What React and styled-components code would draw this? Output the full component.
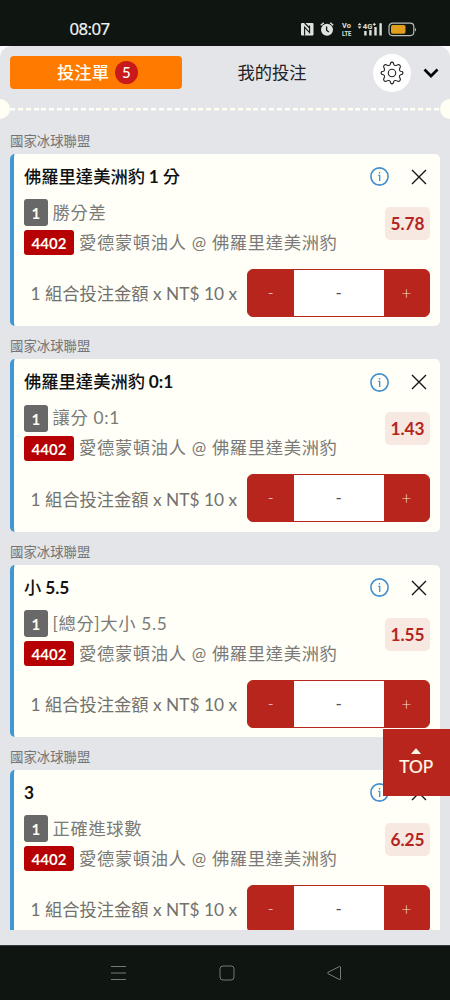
import styled, { createGlobalStyle } from 'styled-components';

const GlobalStyle = createGlobalStyle`
  * {
    box-sizing: border-box;
  }
  body {
    margin: 0;
    background: #0f1511;
    font-family: Lato, "Noto Sans CJK TC", sans-serif;
  }
  button {
    padding: 0;
    border: 0;
    background: none;
    font: inherit;
    color: inherit;
  }
`;

const Phone = styled.div`
  position: relative;
  display: flex;
  flex-direction: column;
  width: 450px;
  height: 1000px;
  overflow: hidden;
  background: #0f1511;
`;

const StatusBar = styled.div`
  display: flex;
  flex: none;
  align-items: center;
  justify-content: space-between;
  height: 45.5px;
  padding: 13px 33px 0 69.5px;
  color: #f1f3f1;
  font: 400 16.8px/20px "Noto Sans", sans-serif;
  letter-spacing: -0.55px;
  -webkit-text-stroke: 0.2px #f1f3f1;

  svg {
    letter-spacing: 0;
    -webkit-text-stroke: 0;
  }
`;

const Backdrop = styled.div`
  flex: none;
  height: 900px;
  background: #fbfbfb;
`;

const Sheet = styled.main`
  display: flex;
  flex-direction: column;
  height: 900px;
  border-radius: 12px 12px 0 0;
  background: #e4e5e8;
`;

const Header = styled.header`
  display: flex;
  flex: none;
  align-items: center;
  height: 54.5px;
  padding: 0 10px;
`;

const Tab = styled.button`
  display: flex;
  align-items: center;
  justify-content: center;
  gap: 6px;
  width: ${({ $active }) => ($active ? '172px' : '180px')};
  height: 33px;
  padding-left: ${({ $active }) => ($active ? '3px' : 0)};
  border-radius: 4px;
  background: ${({ $active }) => ($active ? '#ff7b00' : 'transparent')};
  color: ${({ $active }) => ($active ? '#fffef4' : '#222226')};
  font-size: 17.3px;
  font-weight: ${({ $active }) => ($active ? 500 : 400)};
  line-height: 33px;
`;

const Count = styled.span`
  width: 23px;
  height: 23px;
  border-radius: 50%;
  background: #c81a1b;
  font-size: 15px;
  line-height: 23px;
`;

const Settings = styled.button`
  display: flex;
  align-items: center;
  justify-content: center;
  width: 38px;
  height: 38px;
  margin-left: 10.5px;
  border-radius: 50%;
  background: #fff;
`;

const Collapse = styled.button`
  display: flex;
  margin-left: 12px;
`;

const Perforation = styled.div`
  display: flex;
  flex: none;
  align-items: center;
  justify-content: space-between;
  height: 20px;
  margin: -1px 0 0;
  background: repeating-linear-gradient(90deg, #fffff6 0 5px, transparent 5px 7.85px) 10px 50% / 430px 2.5px
    no-repeat;
`;

const Notch = styled.span`
  width: 10px;
  height: 20px;
  border-radius: ${({ $right }) => ($right ? '10px 0 0 10px' : '0 10px 10px 0')};
  background: #fffff3;
`;

const BetList = styled.section`
  flex: none;
  height: 811px;
  padding: 2px 10px 0;
  overflow: hidden;
`;

const League = styled.div`
  height: 32.8px;
  padding-top: 7px;
  color: #747577;
  font-size: 13.4px;
  line-height: 26px;
`;

const Card = styled.article`
  height: 172.6px;
  padding: 9px 10px 0;
  border-left: 4px solid #3d98d3;
  border-radius: 5px;
  background: #fffff7;
`;

const CardHead = styled.div`
  display: flex;
  align-items: center;
  height: 28px;
  padding-right: 3px;
`;

const Title = styled.h2`
  flex: 1;
  margin: 0;
  color: #111;
  font-size: 17.3px;
  font-weight: 500;
  line-height: 28px;
  word-spacing: -0.5px;

  b {
    font-weight: 700;
  }
`;

const IconButton = styled.button`
  display: flex;
  margin-left: ${({ $gap }) => $gap || 0}px;
`;

const CardBody = styled.div`
  display: flex;
  justify-content: space-between;
  height: 69px;
  padding-top: 9px;
`;

const Line = styled.div`
  display: flex;
  align-items: center;
  gap: 5px;
  height: 26px;
  margin-bottom: 4px;
  color: #7b7a77;
  font-size: 17.3px;
  letter-spacing: 0.66px;
  line-height: 26px;
  white-space: nowrap;
`;

const Tag = styled.span`
  width: ${({ $wide }) => ($wide ? '50px' : '23.5px')};
  height: ${({ $wide }) => ($wide ? '25px' : '27px')};
  border-radius: 3px;
  background: ${({ $wide }) => ($wide ? '#b60004' : '#686868')};
  color: #fffff2;
  font-size: 15px;
  font-weight: 700;
  letter-spacing: 0;
  line-height: ${({ $wide }) => ($wide ? '26px' : '29px')};
  text-align: center;
`;

const Odds = styled.strong`
  width: 45px;
  height: 33px;
  margin-top: 7px;
  border-radius: 5px;
  background: #f7e8e2;
  color: #b4251d;
  font-size: 17.3px;
  font-weight: 700;
  line-height: 34px;
  text-align: center;
`;

const Stake = styled.div`
  display: flex;
  align-items: center;
  justify-content: flex-end;
  gap: 10px;
  height: 48px;
  margin-top: 9px;
  color: #72716e;
  font-size: 17.3px;
  white-space: nowrap;
`;

const Stepper = styled.div`
  display: grid;
  grid-template-columns: 45.5px 90.5px 1fr;
  width: 183px;
  height: 48px;
  overflow: hidden;
  border: 1px solid #b7251c;
  border-radius: 6px;
  background: #b7251c;
  color: #f6d9d1;
  font-size: 17px;
  font-weight: 300;
  line-height: 46px;
  text-align: center;
`;

const Amount = styled.span`
  background: #fff;
  color: #555;
  font-weight: 400;
`;

const TopButton = styled.button`
  position: absolute;
  top: 728.5px;
  right: 0;
  display: flex;
  flex-direction: column;
  align-items: center;
  width: 67.5px;
  height: 67.5px;
  padding-top: 19px;
  background: #b7251c;
  color: #fffbe9;
  font-size: 17.3px;
  line-height: 26px;
  -webkit-text-stroke: 0.2px #fffbe9;
`;

const NavBar = styled.nav`
  position: absolute;
  right: 0;
  bottom: 0;
  left: 0;
  display: flex;
  align-items: center;
  gap: 91.5px;
  height: 55px;
  padding-left: 110px;
  border-top: 1px solid #353b38;
  background: #0f1511;
`;

const bets = [
  { name: '佛羅里達美洲豹', value: '1', unit: ' 分', market: '勝分差', odds: '5.78' },
  { name: '佛羅里達美洲豹', value: '0:1', market: '讓分 0:1', odds: '1.43' },
  { name: '小', value: '5.5', market: '[總分]大小 5.5', odds: '1.55' },
  { value: '3', market: '正確進球數', odds: '6.25' },
];

const GearIcon = () => (
  <svg width="24" height="24" viewBox="0 0 24 24" fill="none" stroke="#222" strokeWidth="1.1" strokeLinejoin="round">
    <path d="M10.3 3.4Q10.4 1.1 12 1.1T13.7 3.4Q14 4.2 15.1 4.5Q16 4.7 16.9 4.1Q18.6 3 19.8 4.2T19.9 7.1Q19.3 8 19.5 8.9Q19.8 10 20.6 10.3Q22.9 10.4 22.9 12T20.6 13.7Q19.8 14 19.5 15.1Q19.3 16 19.9 16.9Q21 18.6 19.8 19.8T16.9 19.9Q16 19.3 15.1 19.5Q14 19.8 13.7 20.6Q13.6 22.9 12 22.9T10.3 20.6Q10 19.8 8.9 19.5Q8 19.3 7.1 19.9Q5.4 21 4.2 19.8T4.1 16.9Q4.7 16 4.5 15.1Q4.2 14 3.4 13.7Q1.1 13.6 1.1 12T3.4 10.3Q4.2 10 4.5 8.9Q4.7 8 4.1 7.1Q3 5.4 4.2 4.2T7.1 4.1Q8 4.7 8.9 4.5Q10 4.2 10.3 3.4Z" />
    <circle cx="12" cy="12" r="3.7" />
  </svg>
);

const InfoIcon = () => (
  <svg width="19" height="19" viewBox="0 0 19 19" fill="none" stroke="#418fce">
    <circle cx="9.5" cy="9.5" r="8.6" strokeWidth="1.6" />
    <path d="M8.3 8.3h1.4V14M9.5 5v1.5" strokeWidth="1.3" />
  </svg>
);

const CloseIcon = () => (
  <svg width="16" height="16" viewBox="0 0 16 16" stroke="#151515" strokeWidth="1.4">
    <path d="M1 1l14 14M15 1L1 15" />
  </svg>
);

const StatusIcons = () => (
  <svg width="117" height="18" viewBox="0 0 117 18" fill="#dfe3df">
    {/* NFC */}
    <rect x="1" y="3" width="12.5" height="12.5" rx="1" />
    <path d="M4.6 15.5V7.2l5 5.4V5.4M4.6 3l5 5" fill="none" stroke="#0f1511" strokeWidth="1.1" />
    {/* alarm */}
    <circle cx="27" cy="9.8" r="6" />
    <path d="M20.8 5.3l3-2.6M33.2 5.3l-3-2.6" stroke="#dfe3df" strokeWidth="1.5" />
    <path d="M26.6 6.5v3.8l2.2 1.8" fill="none" stroke="#0f1511" strokeWidth="1.3" />
    <text x="42" y="8.2" fontFamily="Roboto" fontSize="7.4" fontWeight="700" textLength="8.8" lengthAdjust="spacingAndGlyphs">Vo</text>
    <text x="42" y="15.6" fontFamily="Roboto" fontSize="7.4" fontWeight="700" textLength="9.4" lengthAdjust="spacingAndGlyphs">LTE</text>
    {/* mobile data and signal */}
    <path d="M57.6 5.2l2-2.2 2 2.2zM57.6 6.6l2 2.2 2-2.2z" />
    <text x="62.8" y="8.6" fontFamily="Roboto" fontSize="8" fontWeight="700" textLength="9.6" lengthAdjust="spacingAndGlyphs">4G</text>
    <path d="M72.8 4.4h3M74.3 2.9v3" stroke="#dfe3df" strokeWidth="1" />
    <path d="M64.2 11h2.4v4.6h-2.4zM69.2 10h2.4v5.6h-2.4zM74.3 7h2.4v8.6h-2.4zM79.4 3.2h2.4v12.4h-2.4z" />
    <rect x="89" y="3.2" width="24.8" height="12.4" rx="3.5" fill="none" stroke="#b9bdb6" strokeWidth="1.2" />
    <rect x="91" y="5" width="14.5" height="8.8" rx="1.8" fill="#e0a01c" />
    <path d="M115 7.4q1.6 2 0 4z" />
  </svg>
);

const BetCard = ({ name, value, unit, market, odds }) => (
  <Card>
    <CardHead>
      <Title>
        {name && `${name} `}
        <b>{value}</b>
        {unit}
      </Title>
      <IconButton><InfoIcon /></IconButton>
      <IconButton $gap={22}><CloseIcon /></IconButton>
    </CardHead>
    <CardBody>
      <div>
        <Line>
          <Tag>1</Tag>
          {market}
        </Line>
        <Line>
          <Tag $wide>4402</Tag>
          愛德蒙頓油人 @ 佛羅里達美洲豹
        </Line>
      </div>
      <Odds>{odds}</Odds>
    </CardBody>
    <Stake>
      <span>1 組合投注金額 x NT$ 10 x</span>
      <Stepper>
        <button type="button">-</button>
        <Amount>-</Amount>
        <button type="button">+</button>
      </Stepper>
    </Stake>
  </Card>
);

export default function App() {
  return (
    <Phone>
      <GlobalStyle />
      <StatusBar>
        <span>08:07</span>
        <StatusIcons />
      </StatusBar>
      <Backdrop>
        <Sheet>
          <Header>
            <Tab $active>
              投注單
              <Count>5</Count>
            </Tab>
            <Tab>我的投注</Tab>
            <Settings><GearIcon /></Settings>
            <Collapse>
              <svg width="16" height="10" viewBox="0 0 16 10" fill="none" stroke="#050505" strokeWidth="2.7">
                <path d="M1.5 1.5L8 8l6.5-6.5" />
              </svg>
            </Collapse>
          </Header>
          <Perforation>
            <Notch />
            <Notch $right />
          </Perforation>
          <BetList>
            {bets.map(bet => (
              <div key={bet.odds}>
                <League>國家冰球聯盟</League>
                <BetCard {...bet} />
              </div>
            ))}
          </BetList>
        </Sheet>
      </Backdrop>
      <TopButton>
        <svg width="10" height="6" viewBox="0 0 10 6" fill="#fffbe9">
          <path d="M0 6l4.2-5q.8-.8 1.6 0L10 6z" />
        </svg>
        TOP
      </TopButton>
      <NavBar>
        <svg width="17" height="16" viewBox="0 0 17 16" stroke="#747a77">
          <path d="M1 1.5h15M1 8h15M1 14.5h15" />
        </svg>
        <svg width="16" height="16" viewBox="0 0 16 16" fill="none" stroke="#747a77">
          <rect x="1" y="1" width="14" height="14" rx="3" />
        </svg>
        <svg width="16" height="16" viewBox="0 0 16 16" fill="none" stroke="#747a77" strokeLinejoin="round">
          <path d="M14.5 2v12q0 1-1 .5L2 8.7q-1.2-.7 0-1.4l11.5-5.8q1-.5 1 .5z" />
        </svg>
      </NavBar>
    </Phone>
  );
}
